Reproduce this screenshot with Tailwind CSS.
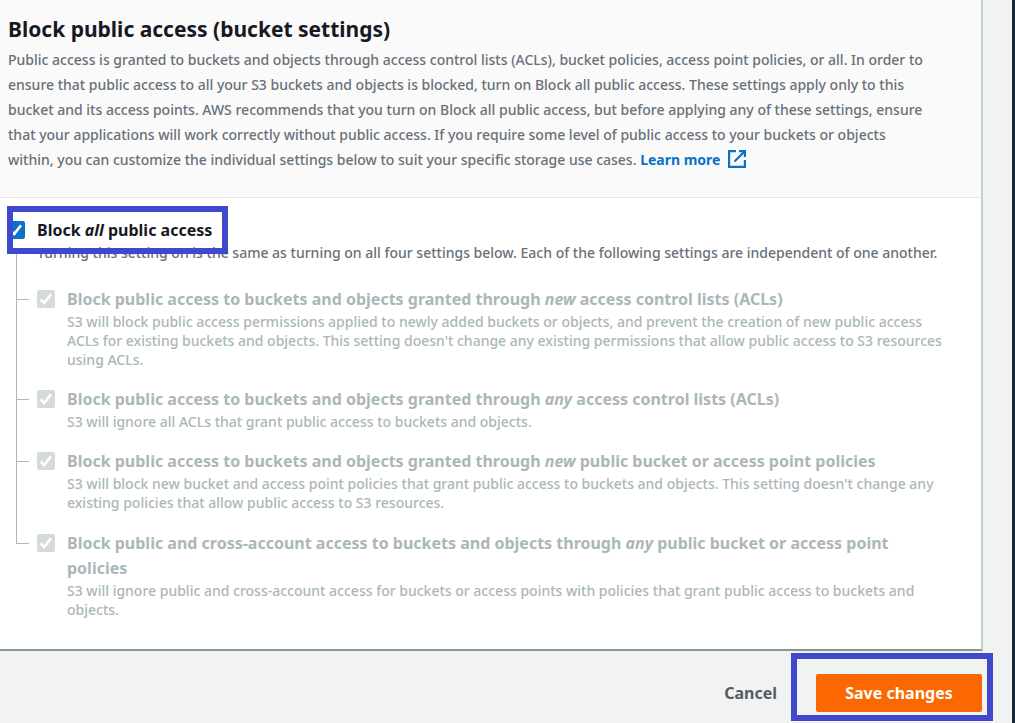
<!DOCTYPE html>
<html lang="en">
<head>
<meta charset="utf-8">
<title>Block public access (bucket settings)</title>
<script src="https://cdn.jsdelivr.net/npm/@tailwindcss/browser@4"></script>
</head>
<body class="min-h-screen border-r-3 border-[#16263d] bg-[#f1f3f3] font-['Noto_Sans',sans-serif] text-[#16191f]">
<svg class="hidden"><symbol id="check" viewBox="0 0 18 18"><path d="M3.500 9.500l3.700 3.500 6.800-8.800" fill="none" stroke="#fff" stroke-width="2.600"/></symbol></svg>
<main>
  <section class="mr-[29px] border-r-2 border-b-2 border-r-[#c8d1d1] border-b-[#879596] bg-white">
    <header class="border-b border-[#e4e8e8] bg-[#fafafa] pt-3 pr-4 pb-[25px] pl-2">
      <h1 class="text-[21px] leading-[35px] font-bold">Block public access (bucket settings)</h1>
      <p class="text-[14px] leading-[25px] font-medium whitespace-nowrap text-[#687078]">Public access is granted to buckets and objects through access control lists (ACLs), bucket policies, access point policies, or all. In order to<br>ensure that public access to all your S3 buckets and objects is blocked, turn on Block all public access. These settings apply only to this<br>bucket and its access points. AWS recommends that you turn on Block all public access, but before applying any of these settings, ensure<br>that your applications will work correctly without public access. If you require some level of public access to your buckets or objects<br>within, you can customize the individual settings below to suit your specific storage use cases. <a href="#" class="font-bold text-[#0972c8]">Learn more <svg class="ml-1 inline size-[18px] align-[-3px]" viewBox="0 0 18 18" fill="none" stroke="#0972c8" stroke-width="2.200" aria-hidden="true"><path d="M8 1.100H1.100v15.800h15.800V10M11 1.100h5.900V7M16.500 1.500L6.500 11.500"/></svg></a></p>
    </header>
    <div class="pt-5 pr-4 pb-[30px] pl-2">
      <div class="relative flex gap-3">
        <span class="-ml-px mt-[3px] grid size-[18px] shrink-0"><input id="all" type="checkbox" checked aria-describedby="all-d" class="col-start-1 row-start-1 size-[18px] appearance-none rounded-xs bg-[#0972c8]"><svg class="pointer-events-none col-start-1 row-start-1 size-[18px]"><use href="#check"/></svg></span>
        <div>
          <label for="all" class="block text-[16px] leading-[25px] font-bold">Block <em>all</em> public access</label>
          <p id="all-d" class="text-[14px] leading-[19px] font-medium whitespace-nowrap text-[#687078]">Turning this setting on is the same as turning on all four settings below. Each of the following settings are independent of one another.</p>
        </div>
        <div class="pointer-events-none absolute -top-3 left-0 -ml-px h-12 w-[221px] border-6 border-[#4048cc]"></div>
      </div>
      <ul class="-mt-2 ml-2 text-[#aab7b8]">
        <li class="flex border-l border-[#aab7b8] pt-[33px]">
          <span class="mt-3 mr-2 w-3 shrink-0 border-t border-[#aab7b8]"></span>
          <span class="mt-[3px] mr-3 grid size-[18px] shrink-0"><input id="a" type="checkbox" checked disabled aria-describedby="a-d" class="col-start-1 row-start-1 size-[18px] appearance-none rounded-xs bg-[#d5dbdb]"><svg class="pointer-events-none col-start-1 row-start-1 size-[18px]"><use href="#check"/></svg></span>
          <div><label for="a" class="block text-[16px] leading-[25px] font-bold whitespace-nowrap">Block public access to buckets and objects granted through <em>new</em> access control lists (ACLs)</label>
          <p id="a-d" class="text-[14px] leading-[19px] font-medium whitespace-nowrap">S3 will block public access permissions applied to newly added buckets or objects, and prevent the creation of new public access<br>ACLs for existing buckets and objects. This setting doesn't change any existing permissions that allow public access to S3 resources<br>using ACLs.</p></div>
        </li>
        <li class="flex border-l border-[#aab7b8] pt-[18px]">
          <span class="mt-3 mr-2 w-3 shrink-0 border-t border-[#aab7b8]"></span>
          <span class="mt-[3px] mr-3 grid size-[18px] shrink-0"><input id="b" type="checkbox" checked disabled aria-describedby="b-d" class="col-start-1 row-start-1 size-[18px] appearance-none rounded-xs bg-[#d5dbdb]"><svg class="pointer-events-none col-start-1 row-start-1 size-[18px]"><use href="#check"/></svg></span>
          <div><label for="b" class="block text-[16px] leading-[25px] font-bold whitespace-nowrap">Block public access to buckets and objects granted through <em>any</em> access control lists (ACLs)</label>
          <p id="b-d" class="text-[14px] leading-[19px] font-medium whitespace-nowrap">S3 will ignore all ACLs that grant public access to buckets and objects.</p></div>
        </li>
        <li class="flex border-l border-[#aab7b8] pt-[18px]">
          <span class="mt-3 mr-2 w-3 shrink-0 border-t border-[#aab7b8]"></span>
          <span class="mt-[3px] mr-3 grid size-[18px] shrink-0"><input id="c" type="checkbox" checked disabled aria-describedby="c-d" class="col-start-1 row-start-1 size-[18px] appearance-none rounded-xs bg-[#d5dbdb]"><svg class="pointer-events-none col-start-1 row-start-1 size-[18px]"><use href="#check"/></svg></span>
          <div><label for="c" class="block text-[16px] leading-[25px] font-bold whitespace-nowrap">Block public access to buckets and objects granted through <em>new</em> public bucket or access point policies</label>
          <p id="c-d" class="text-[14px] leading-[19px] font-medium whitespace-nowrap">S3 will block new bucket and access point policies that grant public access to buckets and objects. This setting doesn't change any<br>existing policies that allow public access to S3 resources.</p></div>
        </li>
        <li class="flex">
          <span class="mr-2 h-8 w-[13px] shrink-0 border-b border-l border-[#aab7b8]"></span>
          <span class="mt-[22px] mr-3 grid size-[18px] shrink-0"><input id="d" type="checkbox" checked disabled aria-describedby="d-d" class="col-start-1 row-start-1 size-[18px] appearance-none rounded-xs bg-[#d5dbdb]"><svg class="pointer-events-none col-start-1 row-start-1 size-[18px]"><use href="#check"/></svg></span>
          <div class="pt-[19px]"><label for="d" class="block text-[16px] leading-[25px] font-bold whitespace-nowrap">Block public and cross-account access to buckets and objects through <em>any</em> public bucket or access point<br>policies</label>
          <p id="d-d" class="text-[14px] leading-[19px] font-medium whitespace-nowrap">S3 will ignore public and cross-account access for buckets or access points with policies that grant public access to buckets and<br>objects.</p></div>
        </li>
      </ul>
    </div>
  </section>
  <footer class="flex items-start justify-end pt-[2px] pr-[19px]">
    <button type="button" class="mt-[21px] mr-[14px] h-[38px] text-[16px] font-bold text-[#545b64]">Cancel</button>
    <div class="border-6 border-[#4048cc] pt-[15px] pr-[5px] pb-[3px] pl-[19px]">
      <button type="button" class="h-[38px] w-[166px] rounded-xs bg-[#fb6800] text-[16px] font-bold text-white">Save changes</button>
    </div>
  </footer>
</main>
</body>
</html>
